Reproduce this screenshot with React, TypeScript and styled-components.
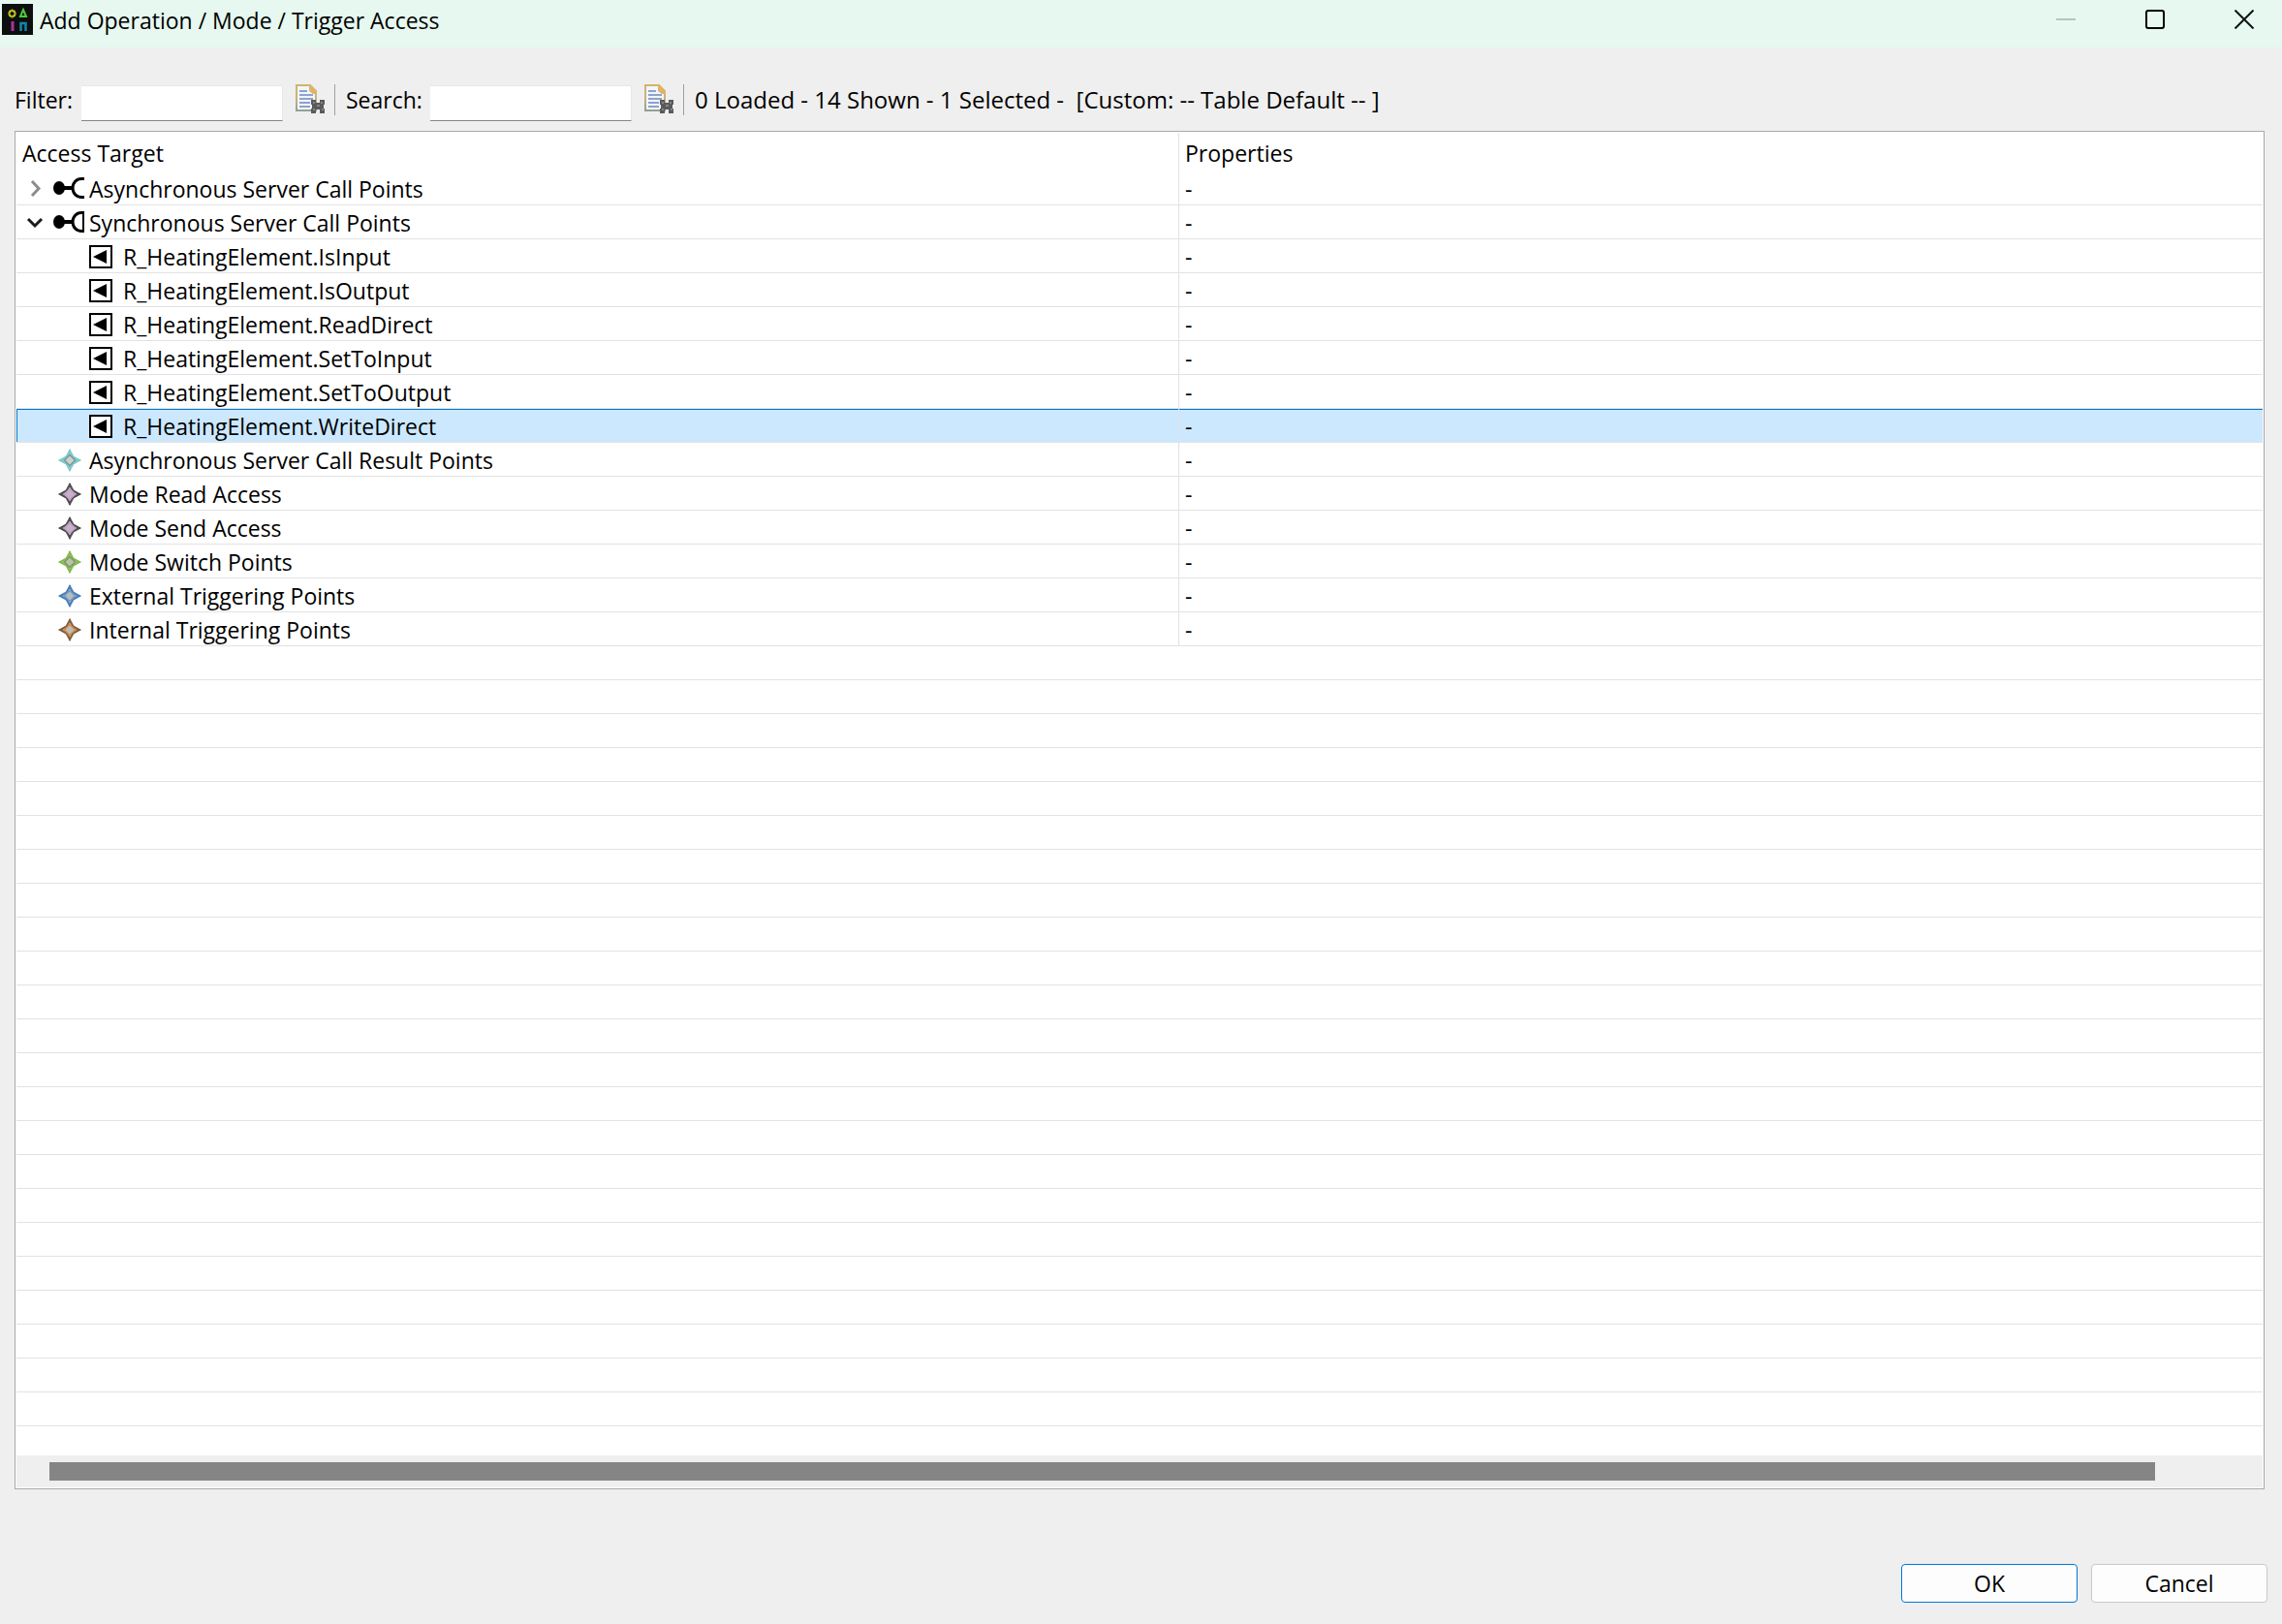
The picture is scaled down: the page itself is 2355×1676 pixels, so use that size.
import React from 'react';
import styled, { createGlobalStyle } from 'styled-components';

const line = '#e2e2e2';

const GlobalStyle = createGlobalStyle`
  *, *::before, *::after { box-sizing: border-box; }
  body { margin: 0; background: #efefef; }
  body, button, input {
    font-family: 'Open Sans', 'Noto Sans', 'Noto Sans CJK KR', sans-serif;
    font-size: 23px;
    line-height: 30px;
    color: #000;
  }
`;

const Dialog = styled.div`
  display: flex;
  flex-direction: column;
  min-height: 100vh;
`;

const TitleBar = styled.header`
  display: flex;
  align-items: flex-start;
  height: 49px;
  padding: 4px 29px 0 2px;
  background: #e6f8ef;
`;

const Title = styled.h1`
  flex: 1;
  margin: 2px 0 0 7px;
  font-size: 23px;
  font-weight: 400;
  line-height: 30px;
`;

const WindowButtons = styled.div`
  display: flex;
  gap: 72px;
  padding-top: 6px;
`;

const WindowButton = styled.button`
  display: flex;
  width: 20px;
  height: 20px;
  padding: 0;
  border: 0;
  background: none;
`;

const Toolbar = styled.div`
  display: flex;
  align-items: flex-start;
  padding: 38px 18px 10px 15px;
  line-height: 32px;
`;

const FieldLabel = styled.label<{ $width: number }>`
  flex: none;
  width: ${(p) => p.$width}px;
`;

const Field = styled.input`
  width: 208px;
  height: 37px;
  margin-top: 1px;
  padding: 0 6px;
  border: solid #e8e8e8;
  border-width: 1px 1px 1px 0;
  border-bottom-color: #868686;
  background: #fff;
  outline: none;
`;

const IconButton = styled.button`
  display: flex;
  width: 30px;
  height: 32px;
  margin-left: 13px;
  padding: 0;
  border: 0;
  background: none;
`;

const Divider = styled.span`
  width: 1px;
  height: 32px;
  margin: 0 11px 0 10px;
  background: #a0a0a0;
`;

const Status = styled.span`
  font-size: 24px;
  white-space: pre;
`;

const Panel = styled.main`
  display: flex;
  flex: 1;
  flex-direction: column;
  margin: 0 18px 0 15px;
  padding: 1px;
  border: 1px solid #a9a9af;
  background: #fff;
`;

const Tree = styled.table`
  width: 100%;
  border-spacing: 0;
  table-layout: fixed;
`;

const TargetCol = styled.col`
  width: 1200px;
`;

const HeadCell = styled.th`
  height: 40px;
  padding: 1px 0 0 6px;
  font-weight: 400;
  text-align: left;

  &:first-child {
    border-right: 1px solid ${line};
  }
`;

const Row = styled.tr<{ $selected?: boolean }>`
  background: ${(p) => (p.$selected ? '#cce8ff' : 'transparent')};
  box-shadow: ${(p) => (p.$selected ? 'inset 1px 1px #0078d4' : 'none')};
`;

const Cell = styled.td`
  height: 35px;
  padding: 2px 0 0 6px;
  border-bottom: 1px solid ${line};

  &:first-child {
    border-right: 1px solid ${line};
  }
`;

const Node = styled.div<{ $child?: boolean }>`
  display: flex;
  align-items: center;
  gap: ${(p) => (p.$child ? 11 : 5)}px;
  height: 32px;
  padding-left: ${(p) => (p.$child ? 69 : 0)}px;
`;

const Toggle = styled.button`
  display: flex;
  flex: none;
  width: 27px;
  height: 24px;
  padding: 0;
  border: 0;
  background: none;
`;

const ToggleSpace = styled.span`
  flex: none;
  width: 27px;
`;

const Filler = styled.div`
  flex: 1;
  background: repeating-linear-gradient(#fff 0 34px, ${line} 34px 35px);
`;

const FillerColumn = styled.div`
  width: 1200px;
  height: 100%;
  border-right: 1px solid ${line};
`;

const ScrollTrack = styled.div`
  height: 33px;
  padding: 7px 111px 7px 34px;
  background: #efefef;
`;

const ScrollThumb = styled.div`
  height: 19px;
  background: #858585;
`;

const Footer = styled.footer`
  display: flex;
  justify-content: flex-end;
  gap: 14px;
  padding: 77px 15px 22px;
`;

const DialogButton = styled.button<{ $primary?: boolean }>`
  width: 182px;
  height: 40px;
  padding: 0;
  border: 1px solid ${(p) => (p.$primary ? '#0078d4' : '#c8c8c8')};
  border-radius: 4px;
  background: #fdfdfd;
`;

const AppIcon = () => (
  <svg width="32" height="32" viewBox="0 0 32 32" fill="none" strokeWidth="2" aria-hidden="true">
    <rect width="32" height="32" fill="#0d0f0f" />
    <circle cx="10.5" cy="10" r="3" stroke="#c4c81e" />
    <path d="M10.5 5v2M10.5 13v2M6 10h2M13 10h2" stroke="#8c9018" strokeWidth="1" />
    <path d="M22 6l-3 7h6z" stroke="#4fc83a" />
    <path d="M11 18v10" stroke="#b0309a" strokeWidth="3" />
    <path d="M19.500 28v-8h5v8" stroke="#0f86ad" strokeWidth="2.500" />
  </svg>
);

const FindIcon = () => (
  <svg width="30" height="32" viewBox="0 0 30 32" aria-hidden="true">
    <defs>
      <linearGradient id="sheetEdge" x1="0" y1="0" x2="0" y2="1">
        <stop offset="0" stopColor="#d2b566" />
        <stop offset="0.5" stopColor="#c8b47c" />
        <stop offset="1" stopColor="#92a092" />
      </linearGradient>
    </defs>
    <path d="M1 1h14l6 6v20H1z" fill="#f1f5fc" stroke="url(#sheetEdge)" strokeWidth="2" />
    <path d="M14 1h2l6 7v2h-4l-4-3z" fill="#e0b468" />
    <path d="M4 7h8M4 11h14M4 15h14M4 19h11M4 23h11" stroke="#8ea2cb" strokeWidth="2" />
    <path d="M17 16h4v3h4v-3h5v5h-1v4h1v5h-5v-4h-4v4h-5v-5h1v-4h-1v-5z" fill="#5a5a5a" />
    <path d="M18 18h2v2h-2zM26 18h2v2h-2zM18 25h2v2h-2zM27 25h2v2h-2zM22 21h3v2h-3z" fill="#858585" />
  </svg>
);

const ChevronIcon = ({ open }: { open?: boolean }) => (
  <svg width="24" height="24" viewBox="0 0 24 24" fill="none" strokeWidth="3" aria-hidden="true">
    {open ? (
      <path d="M6 8l7 7 7-7" stroke="#1c1c1c" />
    ) : (
      <path d="M10 4l7 7.500-7 7.500" stroke="#8c8c8c" />
    )}
  </svg>
);

const CallPointIcon = ({ closed }: { closed?: boolean }) => (
  <svg width="32" height="24" viewBox="0 0 32 24" fill="none" stroke="#000" aria-hidden="true">
    <ellipse cx="6" cy="11" rx="6" ry="7" fill="#000" stroke="none" />
    <path d="M11 11h9" strokeWidth="4" />
    <path d="M32 1.500h-3c-5 0-9 4-9 9.500s4 9.500 9 9.500h3" strokeWidth="3" />
    {closed && <path d="M31 1v20" strokeWidth="2" />}
  </svg>
);

const OperationIcon = () => (
  <svg width="24" height="24" viewBox="0 0 24 24" aria-hidden="true">
    <rect x="1" y="1" width="22" height="22" fill="#fff" stroke="#000" strokeWidth="2" />
    <path d="M4 12l14-7v14z" fill="#000" />
  </svg>
);

const StarIcon = ({ outer, inner, center }: { outer: string; inner: string; center: string }) => (
  <svg width="32" height="24" viewBox="0 0 32 24" aria-hidden="true">
    <path d="M17 2l3.500 6.500L27 12l-6.500 3.500L17 22l-3.500-6.500L7 12l6.500-3.500z" fill="#b4b8b8" stroke={outer} strokeWidth="2" />
    <path d="M17 6.500l5.500 5.500-5.500 5.500-5.500-5.500z" fill={center} stroke={inner} strokeWidth="1.500" />
    <path d="M17 1v4M17 19v4M6 12h4M24 12h4" stroke={outer} strokeWidth="2" />
  </svg>
);

type Item = {
  label: string;
  icon: React.ReactNode;
  toggle?: 'open' | 'closed';
  child?: boolean;
  selected?: boolean;
};

const operations = ['IsInput', 'IsOutput', 'ReadDirect', 'SetToInput', 'SetToOutput', 'WriteDirect'];

const items: Item[] = [
  { label: 'Asynchronous Server Call Points', icon: <CallPointIcon />, toggle: 'closed' },
  { label: 'Synchronous Server Call Points', icon: <CallPointIcon closed />, toggle: 'open' },
  ...operations.map((name) => ({
    label: `R_HeatingElement.${name}`,
    icon: <OperationIcon />,
    child: true,
    selected: name === 'WriteDirect',
  })),
  { label: 'Asynchronous Server Call Result Points', icon: <StarIcon outer="#7acccc" inner="#7f9797" center="#c8d4d2" /> },
  { label: 'Mode Read Access', icon: <StarIcon outer="#505050" inner="#c89ccc" center="#c4b4c4" /> },
  { label: 'Mode Send Access', icon: <StarIcon outer="#505050" inner="#c89ccc" center="#c4b4c4" /> },
  { label: 'Mode Switch Points', icon: <StarIcon outer="#84bc4c" inner="#7f9468" center="#b8c4a8" /> },
  { label: 'External Triggering Points', icon: <StarIcon outer="#4880bc" inner="#7898bc" center="#b4bcc4" /> },
  { label: 'Internal Triggering Points', icon: <StarIcon outer="#84603c" inner="#cc8c54" center="#c4bcb0" /> },
];

export default function App() {
  return (
    <Dialog>
      <GlobalStyle />
      <TitleBar>
        <AppIcon />
        <Title>Add Operation / Mode / Trigger Access</Title>
        <WindowButtons>
          <WindowButton aria-label="Minimize" disabled>
            <svg width="20" height="20" viewBox="0 0 20 20"><path d="M0 10h20" stroke="#b9c4be" strokeWidth="2" /></svg>
          </WindowButton>
          <WindowButton aria-label="Maximize">
            <svg width="20" height="20" viewBox="0 0 20 20"><rect x="1" y="1" width="18" height="18" rx="2" fill="none" stroke="#000" strokeWidth="2" /></svg>
          </WindowButton>
          <WindowButton aria-label="Close">
            <svg width="20" height="20" viewBox="0 0 20 20"><path d="M0.500 0.500l19 19M19.500 0.500l-19 19" stroke="#101418" strokeWidth="2" /></svg>
          </WindowButton>
        </WindowButtons>
      </TitleBar>
      <Toolbar>
        <FieldLabel htmlFor="filter" $width={69}>Filter:</FieldLabel>
        <Field id="filter" type="text" />
        <IconButton aria-label="Clear filter"><FindIcon /></IconButton>
        <Divider />
        <FieldLabel htmlFor="search" $width={87}>Search:</FieldLabel>
        <Field id="search" type="text" />
        <IconButton aria-label="Clear search"><FindIcon /></IconButton>
        <Divider />
        <Status>{'0 Loaded - 14 Shown - 1 Selected -  [Custom: -- Table Default -- ]'}</Status>
      </Toolbar>
      <Panel>
        <Tree>
          <colgroup>
            <TargetCol />
            <col />
          </colgroup>
          <thead>
            <tr>
              <HeadCell scope="col">Access Target</HeadCell>
              <HeadCell scope="col">Properties</HeadCell>
            </tr>
          </thead>
          <tbody>
            {items.map((item) => (
              <Row key={item.label} $selected={item.selected} aria-selected={item.selected}>
                <Cell>
                  <Node $child={item.child}>
                    {item.toggle && (
                      <Toggle aria-label={item.toggle === 'open' ? 'Collapse' : 'Expand'}>
                        <ChevronIcon open={item.toggle === 'open'} />
                      </Toggle>
                    )}
                    {!item.toggle && !item.child && <ToggleSpace />}
                    {item.icon}
                    <span>{item.label}</span>
                  </Node>
                </Cell>
                <Cell>-</Cell>
              </Row>
            ))}
          </tbody>
        </Tree>
        <Filler>
          <FillerColumn />
        </Filler>
        <ScrollTrack>
          <ScrollThumb />
        </ScrollTrack>
      </Panel>
      <Footer>
        <DialogButton $primary>OK</DialogButton>
        <DialogButton>Cancel</DialogButton>
      </Footer>
    </Dialog>
  );
}
